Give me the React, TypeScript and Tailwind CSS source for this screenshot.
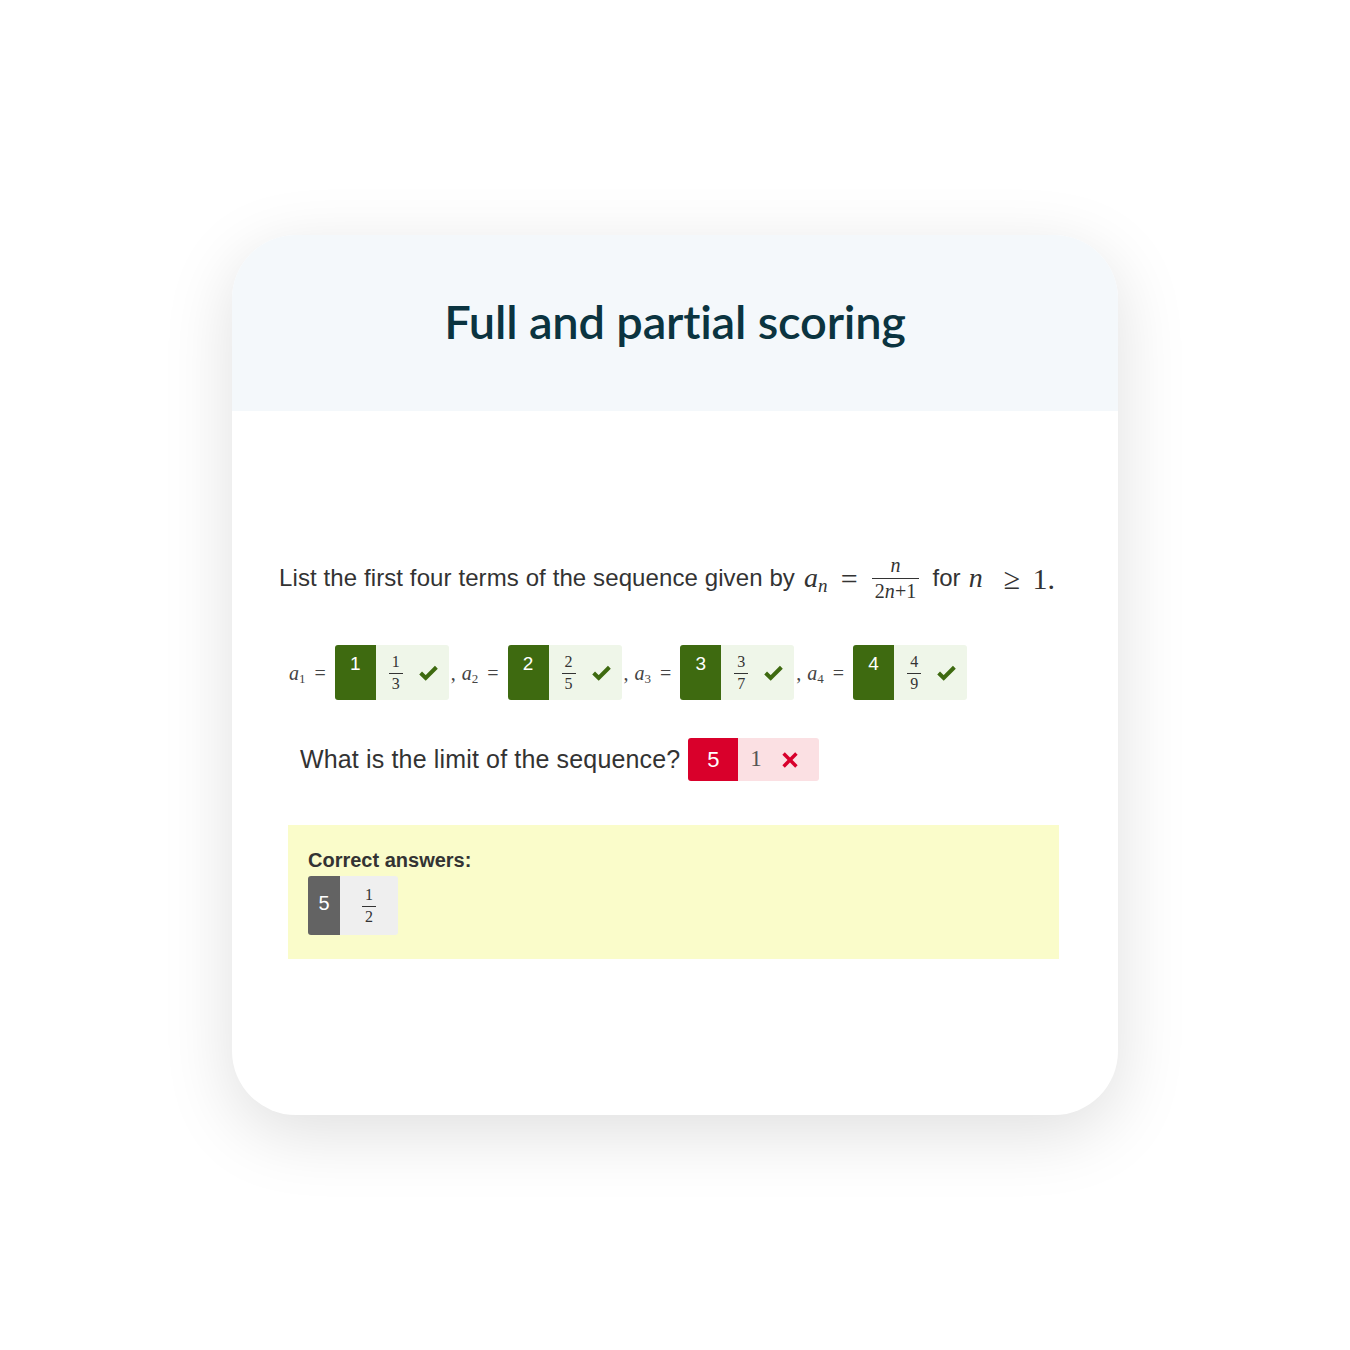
import type { ReactNode } from "react";

const serif = "font-['Liberation_Serif','DejaVu_Serif',serif]";
const sans = "font-['Liberation_Sans',Arial,sans-serif]";

function Frac({ top, bottom, className = "" }: { top: ReactNode; bottom: ReactNode; className?: string }) {
  return (
    <span className={`inline-flex flex-col items-center leading-none ${serif} ${className}`}>
      <span className="px-[3px] pb-[3px]">{top}</span>
      <span className="w-full border-t border-current" />
      <span className="px-[3px] pt-[2px]">{bottom}</span>
    </span>
  );
}

function Check() {
  return (
    <svg viewBox="0 0 24 24" className="h-[21px] w-[21px]" aria-hidden>
      <path d="M3 12.5l5.8 5.6L21 6" fill="none" stroke="#3e6a10" strokeWidth="4.6" />
    </svg>
  );
}

function Cross() {
  return (
    <svg viewBox="0 0 24 24" className="h-[22px] w-[22px]" aria-hidden>
      <path d="M5 5l14 14M19 5L5 19" fill="none" stroke="#d8002c" strokeWidth="3.8" />
    </svg>
  );
}

function Term({ idx, num, den }: { idx: number; num: string; den: string }) {
  return (
    <div className="flex h-[55px] overflow-hidden rounded-[3px]">
      <div className={`flex w-[41px] justify-center bg-[#3e6a10] pt-[5px] text-[19px] text-white ${sans}`}>{idx}</div>
      <div className="flex w-[73px] items-center gap-[15px] bg-[#eff6e9] pl-[13px]">
        <Frac top={num} bottom={den} className="text-[16px] text-[#333]" />
        <Check />
      </div>
    </div>
  );
}

function Sub({ v, s }: { v: string; s: string }) {
  return (
    <span className={`${serif} italic`}>
      {v}
      <sub className="not-italic text-[13px]">{s}</sub>
    </span>
  );
}

export default function App() {
  const terms = [
    { n: "1", d: "3" },
    { n: "2", d: "5" },
    { n: "3", d: "7" },
    { n: "4", d: "9" },
  ];

  return (
    <div className="flex min-h-[1350px] w-full items-center justify-center bg-white">
      <div className="flex h-[880px] w-[886px] flex-col overflow-hidden rounded-[64px] bg-white shadow-[0_18px_70px_rgba(0,0,0,0.13)]">
        <div className="flex h-[176px] items-center justify-center bg-[#f4f8fb] pb-[4px]">
          <h1 className="font-['Lato',sans-serif] text-[47px] font-semibold tracking-[-0.2px] text-[#0b3440]">
            Full and partial scoring
          </h1>
        </div>

        <div className="flex flex-col pt-[144px]">
          <div className={`flex items-center pl-[47px] text-[24px] tracking-[0.1px] text-[#333] ${sans}`}>
            <span>List the first four terms of the sequence given by</span>
            <span className={`${serif} ml-[9px] text-[28px] italic`}>
              a<sub className="text-[19px]">n</sub>
            </span>
            <span className={`${serif} ml-[13px] mr-[14px] text-[30px]`}>=</span>
            <Frac top={<i>n</i>} bottom={<>2<i>n</i>+1</>} className="text-[20px]" />
            <span className="ml-[13px]">for</span>
            <span className={`${serif} ml-[8px] text-[28px] italic`}>n</span>
            <span className={`${serif} ml-[21px] text-[30px]`}>≥</span>
            <span className={`${serif} ml-[12px] text-[30px]`}>1.</span>
          </div>

          <div className="mt-[44px] flex items-center pl-[57px] text-[20px] text-[#444]">
            {terms.map((t, i) => (
              <div key={i} className="flex items-center">
                {i > 0 && <span className={`${serif} ml-[2px] mr-[6px]`}>,</span>}
                <Sub v="a" s={String(i + 1)} />
                <span className={`${serif} mx-[9px]`}>=</span>
                <Term idx={i + 1} num={t.n} den={t.d} />
              </div>
            ))}
          </div>

          <div className="mt-[38px] flex items-center pl-[68px]">
            <span className={`text-[25px] tracking-[0.15px] text-[#333] ${sans}`}>What is the limit of the sequence?</span>
            <div className="ml-[8px] flex h-[43px] overflow-hidden rounded-[3px]">
              <div className={`flex w-[50px] items-center justify-center bg-[#d9002b] text-[22px] text-white ${sans}`}>5</div>
              <div className="flex w-[81px] items-center gap-[17px] bg-[#fbe0e3] pl-[12px]">
                <span className={`${serif} text-[23px] text-[#555]`}>1</span>
                <Cross />
              </div>
            </div>
          </div>

          <div className="ml-[56px] mr-[59px] mt-[44px] h-[134px] bg-[#fafcca] px-[20px] pt-[25px]">
            <div className={`text-[20px] font-semibold leading-none text-[#333] ${sans}`}>Correct answers:</div>
            <div className="mt-[6px] flex h-[59px] w-[90px] overflow-hidden rounded-[3px]">
              <div className={`flex w-[32px] justify-center bg-[#636363] pt-[12px] text-[20px] text-white ${sans}`}>5</div>
              <div className="flex flex-1 items-center justify-center bg-[#efefef]">
                <Frac top="1" bottom="2" className="text-[16px] text-[#333]" />
              </div>
            </div>
          </div>
        </div>
      </div>
    </div>
  );
}
